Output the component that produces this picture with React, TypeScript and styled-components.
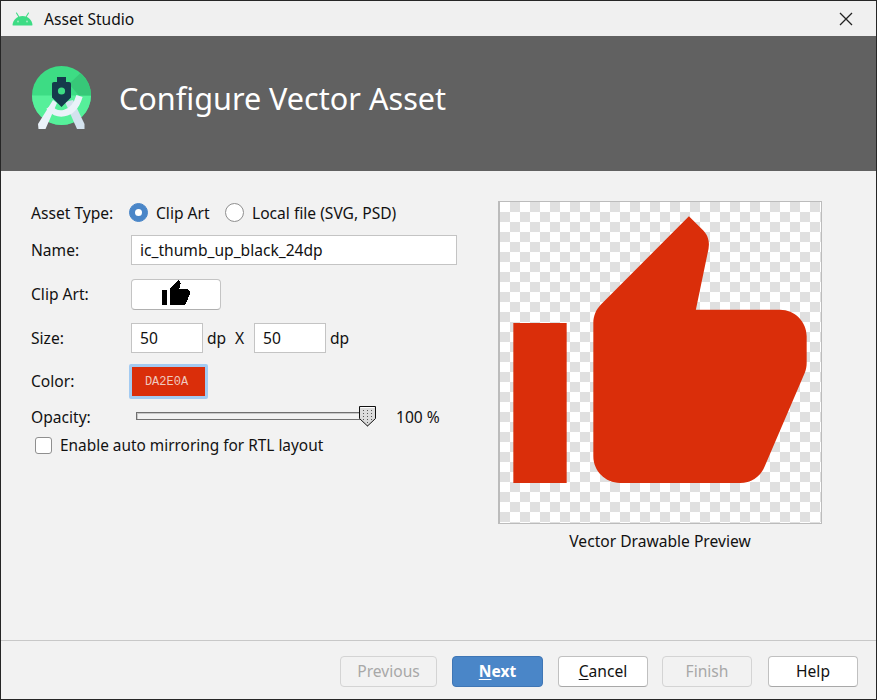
import React from "react";
import styled, { createGlobalStyle } from "styled-components";

const Global = createGlobalStyle`
  html, body { margin: 0; padding: 0; background: #f2f2f2; }
  body { font-family: "Noto Sans", "Open Sans", sans-serif; font-size: 15.6px; color: #111; }
`;

const Window = styled.div`
  width: 877px; height: 700px; box-sizing: border-box;
  border: 1px solid #262626;
  display: flex; flex-direction: column; background: #f2f2f2; overflow: hidden;
`;
const TitleBar = styled.div`
  height: 35px; flex: none; display: flex; align-items: center; background: #f0f0f0;
  padding-left: 11px; gap: 11px; position: relative; box-sizing: border-box;
`;
const CloseIcon = styled.svg`
  position: absolute; right: 23px; top: 11px; width: 14px; height: 14px;
`;
const Banner = styled.div`
  height: 135px; flex: none; background: #616161; display: flex; align-items: center;
  padding-left: 28px; gap: 24px;
`;
const LogoSvg = styled.svg`
  width: 66px; height: 72px; flex: none; margin-top: -11px;
`;
const BannerTitle = styled.div`
  color: #fff; font-size: 30.6px; line-height: 40px; font-weight: 400; margin-top: -11px;
`;
const Body = styled.div`
  flex: 1; display: flex; padding: 30px 0 0 30px;
`;
const Form = styled.div`
  width: 467px; flex: none; display: flex; flex-direction: column;
`;
const Row = styled.div<{ $h: number; $mb: number }>`
  height: ${(p) => p.$h}px; margin-bottom: ${(p) => p.$mb}px;
  display: flex; align-items: center;
`;
const Label = styled.div<{ $lift?: number }>`
  width: 100px; flex: none; line-height: 20px; padding-bottom: ${(p) => p.$lift ?? 0}px;
`;
const RadioDot = styled.span<{ $on?: boolean }>`
  width: 19px; height: 19px; box-sizing: border-box; border-radius: 50%; flex: none;
  background: ${(p) => (p.$on ? "#4a86c8" : "#fff")};
  border: 1px solid ${(p) => (p.$on ? "#4a86c8" : "#8f8f8f")};
  display: flex; align-items: center; justify-content: center;
  &::after { content: ""; width: 7px; height: 7px; border-radius: 50%;
    background: ${(p) => (p.$on ? "#fff" : "transparent")}; }
`;
const RadioItem = styled.label<{ $gap: number; $w: number; $ml?: number }>`
  display: flex; align-items: center; gap: ${(p) => p.$gap}px; width: ${(p) => p.$w}px; flex: none;
  margin-left: ${(p) => p.$ml ?? 0}px; padding-bottom: 1px;
`;
const Input = styled.div<{ $w: number }>`
  width: ${(p) => p.$w}px; height: 30px; box-sizing: border-box; background: #fff;
  border: 1px solid #c4c4c4; padding: 0 0 1px 8px; display: flex; align-items: center; flex: none;
`;
const ClipButton = styled.div`
  width: 90px; height: 31px; box-sizing: border-box; background: #fff; border: 1px solid #c4c4c4;
  border-bottom-color: #b0b0b0; border-radius: 4px; display: flex; align-items: center; justify-content: center;
  padding-bottom: 2px;
`;
const Unit = styled.span<{ $w?: number }>`
  width: ${(p) => (p.$w ? `${p.$w}px` : "auto")}; flex: none; padding: 0 0 1px 4px; box-sizing: border-box;
`;
const SwatchRing = styled.div`
  width: 79px; height: 35px; box-sizing: border-box; margin-left: -2px; padding-right: 4px;
  border: 3px solid #a3cbf2; border-radius: 2px; background: #da2e0a;
  display: flex; align-items: center; justify-content: center;
`;
const SwatchText = styled.span`
  font-family: "Liberation Mono", monospace; font-size: 12px; color: #efc9bf; letter-spacing: 0;
`;
const SliderWrap = styled.div`
  width: 240px; height: 20px; flex: none; margin-left: 5px; position: relative; display: flex; align-items: center;
`;
const Track = styled.div`
  width: 226px; height: 8px; box-sizing: border-box; border: 1px solid #707070;
  border-right: none; background: #f2f2f2; box-shadow: inset 1px 1px 0 #c8c8c8; margin-top: -2px;
`;
const Thumb = styled.svg`
  position: absolute; left: 222px; top: -1px; width: 20px; height: 21px;
`;
const Percent = styled.span`
  margin-left: 20px; line-height: 20px;
`;
const CheckRow = styled.label`
  display: flex; align-items: center; gap: 8px; margin-left: 4px; height: 20px; font-size: 15.4px;
`;
const CheckBox = styled.span`
  width: 17px; height: 17px; box-sizing: border-box; background: #fff; border: 1px solid #8f8f8f;
  border-radius: 3px; flex: none;
`;
const Preview = styled.div`
  width: 324px; display: flex; flex-direction: column; align-items: center;
`;
const PreviewBox = styled.div`
  width: 324px; height: 323px; box-sizing: border-box; border: 1px solid #bcbcbc; border-left-width: 2px;
  background: repeating-conic-gradient(#e0e0e0 0 25%, #fff 0 50%) 0 0 / 20px 20px;
`;
const PreviewSvg = styled.svg`
  display: block; width: 320px; height: 320px; margin: 0.5px 0 0 -0.5px;
`;
const Caption = styled.div`
  margin-top: 7px; line-height: 20px;
`;
const Footer = styled.div`
  height: 59px; flex: none; border-top: 1px solid #c8c8c8; display: flex; align-items: center;
  justify-content: flex-end; padding: 2px 18px 0 0; box-sizing: border-box;
`;
const Btn = styled.div<{ $w: number; $ml: number; $kind?: "primary" | "disabled" }>`
  width: ${(p) => p.$w}px; margin-left: ${(p) => p.$ml}px; height: 31px; box-sizing: border-box;
  border-radius: 4px; display: flex; align-items: center; justify-content: center; padding-bottom: 1px;
  border: 1px solid ${(p) => (p.$kind === "primary" ? "#3f76b5" : p.$kind === "disabled" ? "#d4d4d4" : "#c0c0c0")};
  border-bottom-color: ${(p) => (p.$kind === "primary" ? "#3f76b5" : p.$kind === "disabled" ? "#d4d4d4" : "#a8a8a8")};
  background: ${(p) => (p.$kind === "primary" ? "#4a86c8" : p.$kind === "disabled" ? "#f2f2f2" : "#fff")};
  color: ${(p) => (p.$kind === "primary" ? "#fff" : p.$kind === "disabled" ? "#a8a8a8" : "#111")};
  font-weight: ${(p) => (p.$kind === "primary" ? 700 : 400)};
  u { text-underline-offset: 2px; }
`;

const THUMB = "M1 21h4V9H1v12zm22-11c0-1.1-.9-2-2-2h-6.31l.95-4.57.03-.32c0-.41-.17-.79-.44-1.06L14.17 1 7.59 7.59C7.22 7.95 7 8.45 7 9v10c0 1.1.9 2 2 2h9c.83 0 1.54-.5 1.84-1.22l3.02-7.05c.09-.23.14-.47.14-.73v-2z";

const AndroidHead = () => (
  <svg width="21" height="14" viewBox="0 0 21 14">
    <path d="M.5 13C.8 8 5 4 10.500 4s9.700 4 10 9c0 .3-.2.5-.5.5H1c-.3 0-.5-.2-.5-.5z" fill="#3ddc84" />
    <path d="M4.500 1 6.800 4.800M16.500 1 14.200 4.800" stroke="#3ddc84" strokeWidth="1.100" fill="none" strokeLinecap="round" />
    <circle cx="6" cy="9.500" r=".9" fill="#a8ecc6" />
    <circle cx="15" cy="9.500" r=".9" fill="#a8ecc6" />
  </svg>
);

const StudioLogo = () => (
  <LogoSvg viewBox="0 0 66 72">
    <circle cx="32.500" cy="33.500" r="29.500" fill="#3ddc84" />
    <path d="M3 33.500a29.500 29.500 0 0 0 59 0z" fill="#56f09a" />
    <path d="M40 22 L51.500 11 A29.500 29.500 0 0 1 62 33.500 H50z" fill="#37c878" />
    <path d="M24 38 L28 41 L16.500 67 L9.500 67 L9 62z" fill="#eaf2f9" />
    <path d="M36 40 L44 38 L55.500 62 L55.500 67 L48 67z" fill="#d3e2ee" />
    <path d="M20 45C26 54 44 56 50.500 34" stroke="#eaf2f9" strokeWidth="6.500" fill="none" />
    <path d="M28 15h9v5h3c1.200 0 2 .8 2 2v13.500L32.500 45 23 35.500V22c0-1.200.8-2 2-2h3z" fill="#153a4c" />
    <circle cx="32.500" cy="29" r="3.600" fill="#3ddc84" />
  </LogoSvg>
);

const SliderThumb = () => (
  <Thumb viewBox="0 0 20 21">
    <defs>
      <pattern id="dots" width="4" height="3" patternUnits="userSpaceOnUse">
        <rect width="4" height="3" fill="#dcdcdc" />
        <rect x="1" y="1" width="1" height="1" fill="#555" />
      </pattern>
    </defs>
    <path d="M1.500 .5h16v12l-8 7.500-8-7.500z" fill="url(#dots)" stroke="#111" strokeWidth="1" />
    <path d="M2.500 1.500h14" stroke="#fff" strokeWidth="1" />
  </Thumb>
);

export default function App() {
  return (
    <>
      <Global />
      <Window>
        <TitleBar>
          <AndroidHead />
          Asset Studio
          <CloseIcon viewBox="0 0 14 14">
            <path d="M1 1l12 12M13 1L1 13" stroke="#222" strokeWidth="1.300" fill="none" />
          </CloseIcon>
        </TitleBar>
        <Banner>
          <StudioLogo />
          <BannerTitle>Configure Vector Asset</BannerTitle>
        </Banner>
        <Body>
          <Form>
            <Row $h={24} $mb={10}>
              <Label $lift={1}>Asset Type:</Label>
              <RadioItem $gap={8} $w={96} $ml={-2}><RadioDot $on />Clip Art</RadioItem>
              <RadioItem $gap={8} $w={200}><RadioDot />Local file (SVG, PSD)</RadioItem>
            </Row>
            <Row $h={30} $mb={14}>
              <Label $lift={1}>Name:</Label>
              <Input $w={326}>ic_thumb_up_black_24dp</Input>
            </Row>
            <Row $h={31} $mb={13}>
              <Label $lift={2}>Clip Art:</Label>
              <ClipButton>
                <svg width="30" height="30" viewBox="0 0 24 24" shapeRendering="crispEdges"><path d={THUMB} fill="#000" /></svg>
              </ClipButton>
            </Row>
            <Row $h={30} $mb={11}>
              <Label $lift={1}>Size:</Label>
              <Input $w={72}>50</Input>
              <Unit $w={28}>dp</Unit>
              <Unit $w={23}>X</Unit>
              <Input $w={72}>50</Input>
              <Unit>dp</Unit>
            </Row>
            <Row $h={35} $mb={8}>
              <Label $lift={1}>Color:</Label>
              <SwatchRing><SwatchText>DA2E0A</SwatchText></SwatchRing>
            </Row>
            <Row $h={20} $mb={8}>
              <Label>Opacity:</Label>
              <SliderWrap>
                <Track />
                <SliderThumb />
              </SliderWrap>
              <Percent>100 %</Percent>
            </Row>
            <CheckRow><CheckBox />Enable auto mirroring for RTL layout</CheckRow>
          </Form>
          <Preview>
            <PreviewBox>
              <PreviewSvg viewBox="0 0 24 24"><path d={THUMB} fill="#da2e0a" /></PreviewSvg>
            </PreviewBox>
            <Caption>Vector Drawable Preview</Caption>
          </Preview>
        </Body>
        <Footer>
          <Btn $w={97} $ml={0} $kind="disabled">Previous</Btn>
          <Btn $w={91} $ml={15} $kind="primary"><span><u>N</u>ext</span></Btn>
          <Btn $w={90} $ml={15}><span><u>C</u>ancel</span></Btn>
          <Btn $w={90} $ml={14} $kind="disabled">Finish</Btn>
          <Btn $w={90} $ml={16}>Help</Btn>
        </Footer>
      </Window>
    </>
  );
}
